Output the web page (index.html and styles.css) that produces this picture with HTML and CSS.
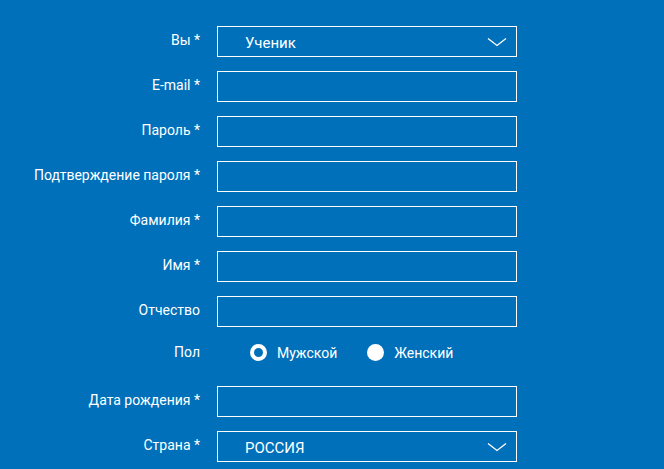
FILE: index.html
```html
<!DOCTYPE html>
<html lang="ru">
<head>
<meta charset="utf-8">
<link rel="stylesheet" href="styles.css">
</head>
<body>
<form class="form">
  <div class="row">
    <label class="label">Вы *</label>
    <div class="field select"><span class="value">Ученик</span>
      <svg class="chev" width="20" height="10" viewBox="0 0 20 10"><path d="M1 1.5 L10 8.5 L19 1.5" fill="none" stroke="#fff" stroke-width="1.3"/></svg>
    </div>
  </div>
  <div class="row"><label class="label">E-mail *</label><div class="field"></div></div>
  <div class="row"><label class="label">Пароль *</label><div class="field"></div></div>
  <div class="row"><label class="label">Подтверждение пароля *</label><div class="field"></div></div>
  <div class="row"><label class="label">Фамилия *</label><div class="field"></div></div>
  <div class="row"><label class="label">Имя *</label><div class="field"></div></div>
  <div class="row"><label class="label">Отчество</label><div class="field"></div></div>
  <div class="row radio-row">
    <label class="label">Пол</label>
    <div class="radios">
      <span class="radio"><span class="dot checked"></span>Мужской</span>
      <span class="radio"><span class="dot"></span>Женский</span>
    </div>
  </div>
  <div class="row"><label class="label">Дата рождения *</label><div class="field"></div></div>
  <div class="row">
    <label class="label">Страна *</label>
    <div class="field select"><span class="value">РОССИЯ</span>
      <svg class="chev" width="20" height="10" viewBox="0 0 20 10"><path d="M1 1.5 L10 8.5 L19 1.5" fill="none" stroke="#fff" stroke-width="1.3"/></svg>
    </div>
  </div>
</form>
</body>
</html>
```
FILE: styles.css
```css
html, body {
  margin: 0;
  padding: 0;
  background: #0070BA;
  height: 100%;
}
body {
  font-family: Roboto, "Liberation Sans", Arial, sans-serif;
  color: #fff;
  overflow: hidden;
}
.form {
  display: flex;
  flex-direction: column;
  padding-top: 26px;
}
.row {
  display: flex;
  align-items: center;
  height: 31px;
  margin-bottom: 14px;
}
.label {
  width: 217px;
  flex: none;
  text-align: right;
  font-size: 14px;
  padding-right: 17px;
  padding-bottom: 3px;
  box-sizing: border-box;
}
.field {
  width: 300px;
  height: 31px;
  box-sizing: border-box;
  border: 1px solid #fff;
  display: flex;
  align-items: center;
  position: relative;
}
.select .value {
  font-size: 15px;
  padding-left: 27px;
  padding-top: 2px;
}
.select .chev {
  position: absolute;
  right: 9px;
  top: 10px;
}
.radio-row {
  height: 23px;
  margin-bottom: 22px;
}
.radio-row .label {
  padding-bottom: 1px;
}
.radios {
  display: flex;
  align-items: center;
  padding-left: 33px;
  font-size: 14px;
}
.radio {
  display: flex;
  align-items: center;
  margin-right: 30px;
}
.dot {
  width: 17px;
  height: 17px;
  border-radius: 50%;
  background: #fff;
  box-sizing: border-box;
  margin-right: 10px;
}
.dot.checked {
  background: transparent;
  border: 4px solid #fff;
}
```
